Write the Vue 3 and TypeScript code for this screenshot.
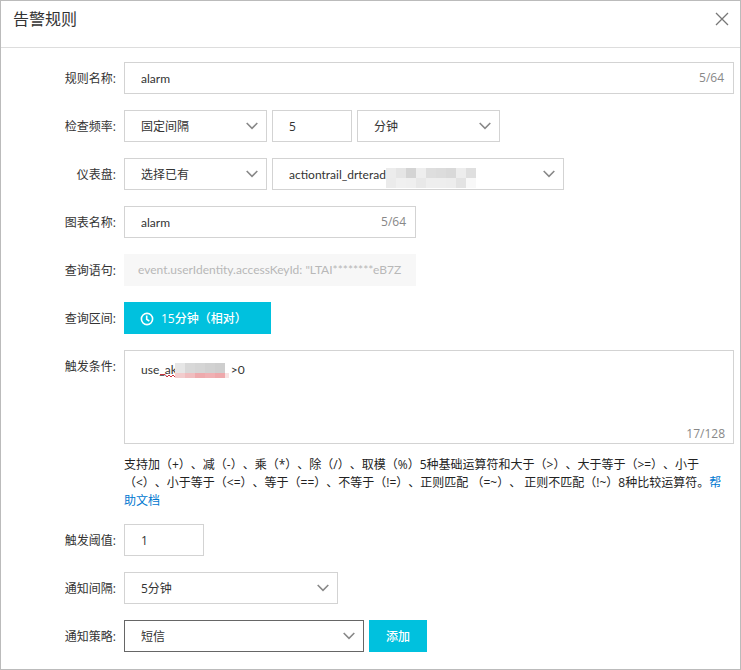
<script setup lang="ts">
import { computed, ref } from 'vue'

interface Cell {
  x: number
  y: number
  w: number
  h: number
  fill: string
}

const hiddenPart = '\u2002'.repeat(9)

const ruleName = ref('alarm')
const frequencyType = ref('固定间隔')
const frequencyValue = ref('5')
const frequencyUnit = ref('分钟')
const dashboardMode = ref('选择已有')
const dashboard = ref('actiontrail_drterad')
const chartName = ref('alarm')
const query = ref('event.userIdentity.accessKeyId: "LTAI********eB7Z')
const condition = ref('use_ak' + hiddenPart + '>0')
const threshold = ref('1')
const notifyInterval = ref('5分钟')
const notifyPolicy = ref('短信')

const ruleNameCount = computed(() => `${ruleName.value.length}/64`)
const chartNameCount = computed(() => `${chartName.value.length}/64`)
const conditionCount = computed(() => `${condition.value.length}/128`)

function row(fills: string[], y: number, h: number): Cell[] {
  return fills.map((fill, i) => ({ x: i * 10, y, w: 10, h, fill }))
}

const dashboardMask: Cell[] = [
  ...row(['#ececec', '#e5e5e5', '#d4d4d4', '#eeeeee', '#dedede', '#dcdcdc', '#d9d9d9', '#ededed', '#dfdfdf'], 0, 10),
  ...row(['#ebebeb', '#f0f0f0', '#efefef', '#e8e8e8', '#eeeeee', '#eeeeee', '#ededed', '#e3e3e3', '#f8f8f8'], 10, 10),
]

const conditionMask: Cell[] = [
  ...row(['#e6e6e6', '#d8d8d8', '#d5d5d5', '#d1d1d1', '#cecece'], 0, 10),
  ...row(['#f2cccd', '#f0bdbf', '#eeaaad', '#f0b0b3', '#eea8ab', '#f8e2e2'], 10, 5),
]
</script>

<template>
  <div class="dialog" role="dialog" aria-labelledby="dialog-title">
    <header class="header">
      <h1 id="dialog-title" class="title">告警规则</h1>
      <button type="button" class="close" aria-label="关闭">
        <svg width="14" height="14" viewBox="0 0 14 14" fill="none" stroke="#777" stroke-width="1.3">
          <path d="M1 1 13 13M13 1 1 13" />
        </svg>
      </button>
    </header>

    <form class="form" @submit.prevent>
      <div class="row">
        <label class="label" for="rule-name">规则名称:</label>
        <div class="field grow">
          <input id="rule-name" v-model="ruleName" class="control latin" type="text" maxlength="64" />
          <span class="count">{{ ruleNameCount }}</span>
        </div>
      </div>

      <div class="row">
        <label class="label" for="frequency">检查频率:</label>
        <div class="field small">
          <select id="frequency" v-model="frequencyType" class="control">
            <option>固定间隔</option>
          </select>
          <svg class="chevron" viewBox="0 0 12 8"><path d="M.7 1 6 6.3 11.3 1" /></svg>
        </div>
        <div class="field tiny">
          <input v-model="frequencyValue" class="control" type="text" aria-label="间隔数值" />
        </div>
        <div class="field small">
          <select v-model="frequencyUnit" class="control" aria-label="间隔单位">
            <option>分钟</option>
          </select>
          <svg class="chevron" viewBox="0 0 12 8"><path d="M.7 1 6 6.3 11.3 1" /></svg>
        </div>
      </div>

      <div class="row">
        <label class="label" for="dashboard-mode">仪表盘:</label>
        <div class="field small">
          <select id="dashboard-mode" v-model="dashboardMode" class="control">
            <option>选择已有</option>
          </select>
          <svg class="chevron" viewBox="0 0 12 8"><path d="M.7 1 6 6.3 11.3 1" /></svg>
        </div>
        <div class="field large">
          <select v-model="dashboard" class="control latin" aria-label="仪表盘名称">
            <option>actiontrail_drterad</option>
          </select>
          <svg class="mask dashboard-mask" width="90" height="20" aria-hidden="true">
            <rect v-for="(c, i) in dashboardMask" :key="i" :x="c.x" :y="c.y" :width="c.w" :height="c.h" :fill="c.fill" />
          </svg>
          <svg class="chevron" viewBox="0 0 12 8"><path d="M.7 1 6 6.3 11.3 1" /></svg>
        </div>
      </div>

      <div class="row">
        <label class="label" for="chart-name">图表名称:</label>
        <div class="field large">
          <input id="chart-name" v-model="chartName" class="control latin" type="text" maxlength="64" />
          <span class="count">{{ chartNameCount }}</span>
        </div>
      </div>

      <div class="row">
        <label class="label" for="query">查询语句:</label>
        <div class="field large">
          <input id="query" v-model="query" class="control latin query" type="text" disabled />
        </div>
      </div>

      <div class="row">
        <label class="label" for="range">查询区间:</label>
        <button id="range" type="button" class="primary range">
          <svg width="14" height="14" viewBox="0 0 14 14" fill="none" stroke="#fff" stroke-width="1.6">
            <circle cx="7" cy="7" r="5.6" />
            <path d="M6.7 3.6V7.3L9.3 9" />
          </svg>
          <span>15分钟（相对）</span>
        </button>
      </div>

      <div class="row top">
        <label class="label" for="condition">触发条件:</label>
        <div class="stack">
          <div class="field">
            <textarea id="condition" v-model="condition" class="control latin area" maxlength="128" spellcheck="false"></textarea>
            <svg class="mask squiggle" width="16" height="4" viewBox="0 0 16 4" fill="none" stroke="#c8323c" aria-hidden="true">
              <path d="M0 .5H5L7 3 9 1 11 3 13 1 15 3" />
            </svg>
            <svg class="mask condition-mask" width="54" height="15" aria-hidden="true">
              <rect v-for="(c, i) in conditionMask" :key="i" :x="c.x" :y="c.y" :width="c.w" :height="c.h" :fill="c.fill" />
            </svg>
            <span class="count area-count">{{ conditionCount }}</span>
          </div>
          <p class="help">支持加（+）、减（-）、乘（*）、除（/）、取模（%）5种基础运算符和大于（&gt;）、大于等于（&gt;=）、小于（&lt;）、小于等于（&lt;=）、等于（==）、不等于（!=）、正则匹配 （=~）、 正则不匹配（!~）8种比较运算符。<a href="#">帮<span class="keep">助文档</span></a></p>
        </div>
      </div>

      <div class="row">
        <label class="label" for="threshold">触发阈值:</label>
        <div class="field tiny">
          <input id="threshold" v-model="threshold" class="control" type="text" />
        </div>
      </div>

      <div class="row">
        <label class="label" for="notify-interval">通知间隔:</label>
        <div class="field medium">
          <select id="notify-interval" v-model="notifyInterval" class="control">
            <option>5分钟</option>
          </select>
          <svg class="chevron" viewBox="0 0 12 8"><path d="M.7 1 6 6.3 11.3 1" /></svg>
        </div>
      </div>

      <div class="row">
        <label class="label" for="notify-policy">通知策略:</label>
        <div class="field policy">
          <select id="notify-policy" v-model="notifyPolicy" class="control active">
            <option>短信</option>
          </select>
          <svg class="chevron" viewBox="0 0 12 8"><path d="M.7 1 6 6.3 11.3 1" /></svg>
        </div>
        <button type="button" class="primary">添加</button>
      </div>
    </form>
  </div>
</template>

<style>
body {
  background: #fff;
}
</style>

<style scoped>
.dialog,
.dialog * {
  box-sizing: border-box;
}

.dialog {
  min-height: 100vh;
  border: 1px solid #bbb;
  background: #fff;
  color: #333;
  font: 12px/18px "Open Sans", "Noto Sans CJK SC", sans-serif;
  text-spacing-trim: space-all;
}

.header {
  display: flex;
  align-items: center;
  justify-content: space-between;
  height: 47px;
  padding: 0 11px 10px 12px;
  border-bottom: 1px solid #ddd;
}

.title {
  margin: 0;
  font-size: 16px;
  font-weight: 400;
  line-height: 24px;
}

.close {
  display: flex;
  padding: 0;
  border: 0;
  background: none;
  cursor: pointer;
}

.form {
  display: flex;
  flex-direction: column;
  gap: 16px;
  padding: 14px 6px 17px 0;
}

.row {
  display: flex;
  align-items: center;
  gap: 5px;
}

.row.top {
  align-items: flex-start;
}

.label {
  flex: none;
  width: 118px;
  padding: 2px 3px 0 0;
  line-height: 30px;
  text-align: right;
}

.field {
  position: relative;
  display: flex;
}

.grow,
.stack {
  flex: 1;
  min-width: 0;
}

.tiny {
  width: 80px;
}

.small {
  width: 143px;
}

.medium {
  width: 214px;
}

.policy {
  width: 240px;
}

.large {
  width: 292px;
}

.control {
  display: block;
  width: 100%;
  height: 32px;
  margin: 0;
  padding: 0 16px;
  border: 1px solid #d3d3d3;
  border-radius: 0;
  outline: none;
  background: #fff;
  color: #333;
  font: inherit;
  appearance: none;
}

select.control {
  padding-top: 2px;
}

.control.latin {
  font-family: Lato, "Noto Sans CJK SC", sans-serif;
}

.control.active {
  border-color: #666;
}

.control.query {
  padding: 0 13px 2px;
  border-color: #f7f7f7;
  background: #f7f7f7;
  color: #b8b8b8;
}

.control.area {
  height: 94px;
  padding: 10px 16px;
  resize: none;
}

.count {
  position: absolute;
  top: 7px;
  right: 10px;
  color: #888;
  pointer-events: none;
}

.area-count {
  top: auto;
  right: 9px;
  bottom: 1px;
}

.chevron {
  position: absolute;
  top: 12px;
  right: 9px;
  width: 12px;
  height: 8px;
  fill: none;
  stroke: #888;
  stroke-width: 1.6;
  pointer-events: none;
}

.mask {
  position: absolute;
  pointer-events: none;
}

.dashboard-mask {
  top: 10px;
  left: 114px;
}

.squiggle {
  top: 24px;
  left: 36px;
}

.condition-mask {
  top: 13px;
  left: 51px;
}

.help {
  margin: 12px 0 -2px;
  color: #222;
}

.help a {
  color: #0078d0;
  text-decoration: none;
}

.keep {
  white-space: nowrap;
}

.primary {
  display: flex;
  align-items: center;
  justify-content: center;
  gap: 7px;
  height: 32px;
  padding: 1px 16px 0;
  border: 0;
  background: #00c1de;
  color: #fff;
  font: inherit;
  font-weight: 500;
  cursor: pointer;
}

.policy + .primary {
  width: 58px;
}

.range {
  justify-content: flex-start;
  width: 147px;
  white-space: nowrap;
}
</style>
